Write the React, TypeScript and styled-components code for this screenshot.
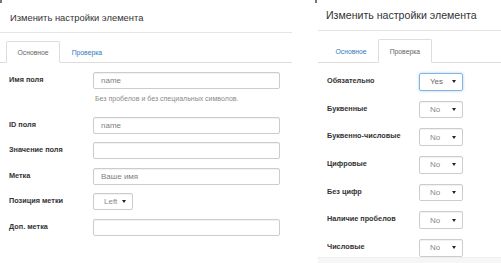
import styled, { createGlobalStyle, css } from "styled-components";

const GlobalStyle = createGlobalStyle`
	html, body {
		margin: 0;
		padding: 0;
		background: #fff;
	}
	body {
		font-family: "Liberation Sans", Arial, sans-serif;
		color: #333;
	}
`;

const Page = styled.div`
	display: flex;
	width: 501px;
	height: 263px;
	overflow: hidden;
	gap: 26px;
`;

const Panel = styled.section<{ $width?: number }>`
	position: relative;
	display: flex;
	flex-direction: column;
	${({ $width }) => ($width ? `width: ${$width}px;` : "flex: 1;")}
`;

// little scan artefacts in the corners of the captures
const Mark = styled.span<{ $left: number }>`
	position: absolute;
	top: 0;
	left: ${({ $left }) => $left}px;
	width: 2px;
	height: 3px;
	background: #777;
`;

const Header = styled.div<{ $height: number; $size: number; $pad: number }>`
	height: ${({ $height }) => $height - 1}px;
	display: flex;
	align-items: center;
	padding-left: ${({ $pad }) => $pad}px;
	padding-top: ${({ $size }) => ($size > 10 ? 0 : 3)}px;
	border-bottom: 1px solid #e5e5e5;
	font-size: ${({ $size }) => $size}px;
	color: #333;
	box-sizing: border-box;
`;

const TabList = styled.div<{ $top: number }>`
	display: flex;
	align-items: flex-end;
	padding: ${({ $top }) => $top}px 0 0 6px;
	border-bottom: 1px solid #ddd;
`;

const Tab = styled.div<{ $active?: boolean; $height: number }>`
	height: ${({ $height }) => $height}px;
	padding: 0 10.5px;
	display: flex;
	align-items: center;
	font-size: 6.8px;
	margin-bottom: -1px;
	border: 1px solid transparent;
	border-radius: 2px 2px 0 0;
	${({ $active }) =>
		$active
			? css`
					color: #666;
					background: #fff;
					border-color: #ddd;
					border-bottom-color: #fff;
			  `
			: css`
					color: #337ab7;
			  `}
`;

const Form = styled.div<{ $top: number; $gap: number; $left: number }>`
	display: flex;
	flex-direction: column;
	gap: ${({ $gap }) => $gap}px;
	padding: ${({ $top }) => $top}px 0 0 ${({ $left }) => $left}px;
`;

const Row = styled.div`
	display: flex;
	align-items: flex-start;
`;

const Label = styled.div<{ $width: number; $h: number }>`
	width: ${({ $width }) => $width}px;
	flex-shrink: 0;
	height: ${({ $h }) => $h}px;
	line-height: ${({ $h }) => $h - 2}px;
	font-size: 7.3px;
	font-weight: bold;
	color: #333;
	white-space: nowrap;
`;

const Field = styled.div`
	display: flex;
	flex-direction: column;
`;

const Input = styled.div<{ $width: number; $h: number }>`
	width: ${({ $width }) => $width}px;
	height: ${({ $h }) => $h}px;
	box-sizing: border-box;
	border: 1px solid #ccc;
	border-radius: 2px;
	padding-left: 7px;
	display: flex;
	align-items: center;
	font-size: 8px;
	color: #808080;
	box-shadow: inset 0 1px 1px rgba(0, 0, 0, 0.06);
`;

const Select = styled(Input)<{ $focus?: boolean }>`
	justify-content: space-between;
	padding: 0 6px 0 10px;
	color: #888;
	${({ $focus }) =>
		$focus &&
		css`
			border-color: #86b3e0;
			box-shadow: 0 0 3px rgba(102, 175, 233, 0.6);
			color: #666;
		`}
`;

const Caret = styled.span`
	width: 0;
	height: 0;
	border-left: 2px solid transparent;
	border-right: 2px solid transparent;
	border-top: 3px solid #222;
`;

const Help = styled.div`
	margin: 5px 0 4px 2px;
	line-height: 10px;
	font-size: 7px;
	color: #8a8a8a;
`;

const Footer = styled.div`
	margin-top: auto;
	height: 5px;
	background: #f6f6f6;
	border-top: 1px solid #eee;
`;

const SelectBox = ({ value, width, h, focus }: { value: string; width: number; h: number; focus?: boolean }) => (
	<Select $width={width} $h={h} $focus={focus}>
		{value}
		<Caret />
	</Select>
);

const basicFields = [
	{ label: "Имя поля", value: "name", help: "Без пробелов и без специальных символов." },
	{ label: "ID поля", value: "name" },
	{ label: "Значение поля", value: "" },
	{ label: "Метка", value: "Ваше имя" },
	{ label: "Позиция метки", value: "Left", select: true },
	{ label: "Доп. метка", value: "" },
];

const checks = [
	{ label: "Обязательно", value: "Yes", focus: true },
	{ label: "Буквенные", value: "No" },
	{ label: "Буквенно-числовые", value: "No" },
	{ label: "Цифровые", value: "No" },
	{ label: "Без цифр", value: "No" },
	{ label: "Наличие пробелов", value: "No" },
	{ label: "Числовые", value: "No" },
];

export default function App() {
	return (
		<>
			<GlobalStyle />
			<Page>
				<Panel $width={292}>
					<Mark $left={0} />
					<Header $height={34} $size={9.4} $pad={10}>Изменить настройки элемента</Header>
					<TabList $top={8}>
						<Tab $active $height={20}>Основное</Tab>
						<Tab $height={20}>Проверка</Tab>
					</TabList>
					<Form $top={9} $gap={8.5} $left={9}>
						{basicFields.map((f) => (
							<Row key={f.label}>
								<Label $width={84} $h={17}>{f.label}</Label>
								<Field>
									{f.select ? (
										<SelectBox value={f.value} width={40} h={17} />
									) : (
										<Input $width={187} $h={17}>{f.value}</Input>
									)}
									{f.help && <Help>{f.help}</Help>}
								</Field>
							</Row>
						))}
					</Form>
				</Panel>
				<Panel>
					<Mark $left={-3} />
					<Header $height={32} $size={10.6} $pad={8}>Изменить настройки элемента</Header>
					<TabList $top={8}>
						<Tab $height={22}>Основное</Tab>
						<Tab $active $height={22}>Проверка</Tab>
					</TabList>
					<Form $top={10} $gap={10.1} $left={9}>
						{checks.map((c) => (
							<Row key={c.label}>
								<Label $width={92} $h={17.6}>{c.label}</Label>
								<SelectBox value={c.value} width={44} h={17.6} focus={c.focus} />
							</Row>
						))}
					</Form>
					<Footer />
				</Panel>
			</Page>
		</>
	);
}
